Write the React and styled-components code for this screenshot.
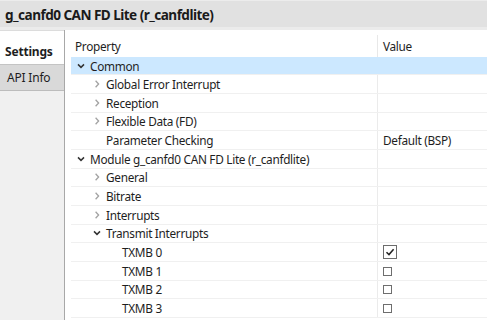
import React from 'react';
import styled, { createGlobalStyle } from 'styled-components';

const GlobalStyle = createGlobalStyle`
  body {
    margin: 0;
    font-family: "Noto Sans", "Open Sans", sans-serif;
    color: #1e1e1e;
  }
`;

const Page = styled.div`
  width: 487px;
  height: 320px;
  overflow: hidden;
  display: flex;
  flex-direction: column;
  background: #fff;
`;

const TitleBar = styled.div`
  height: 26px;
  flex-shrink: 0;
  display: flex;
  align-items: center;
  padding-left: 5px;
  background: #e1e1e1;
  border-top: 1px solid #ececec;
  border-bottom: 3px solid #ebebeb;
  font-size: 13.6px;
  font-weight: 700;
  color: #1a1a1a;
  letter-spacing: -0.55px;
`;

const Body = styled.div`
  flex: 1;
  display: flex;
  min-height: 0;
`;

const Sidebar = styled.div`
  width: 64px;
  flex-shrink: 0;
  background: #f0f0f0;
  border-right: 1px solid #a8a8a8;
  display: flex;
  flex-direction: column;
`;

const Tab = styled.div`
  height: ${p => (p.active ? '34px' : '27px')};
  display: flex;
  align-items: center;
  padding-left: ${p => (p.active ? '5px' : '7px')};
  font-size: 12px;
  letter-spacing: -0.2px;
  font-weight: ${p => (p.active ? 700 : 400)};
  background: ${p => (p.active ? '#fff' : '#d9d9d9')};
  border-top: 1px solid ${p => (p.active ? '#dcdcdc' : '#c4c4c4')};
  border-bottom: ${p => (p.active ? 'none' : '1px solid #bcbcbc')};
  box-sizing: border-box;
  padding-top: ${p => (p.active ? '8px' : '0')};
`;

const Content = styled.div`
  flex: 1;
  padding-left: 6px;
  min-width: 0;
`;

const Table = styled.div`
  display: flex;
  flex-direction: column;
`;

const HeaderRow = styled.div`
  display: grid;
  grid-template-columns: 306px 1fr;
  height: 26.7px;
  font-size: 11.8px;
  letter-spacing: -0.3px;
`;

const HeaderCell = styled.div`
  display: flex;
  align-items: flex-end;
  padding-left: ${p => (p.value ? '5px' : '4px')};
  padding-bottom: 3px;
  margin-top: 5px;
  border-left: ${p => (p.value ? '1px solid #e8e8e8' : 'none')};
`;

const Row = styled.div`
  display: grid;
  grid-template-columns: 306px 1fr;
  height: 18.67px;
  box-sizing: border-box;
  border-bottom: 1px solid #f0f0f0;
  background: ${p => (p.selected ? '#cce8ff' : 'transparent')};
  font-size: 11.8px;
  letter-spacing: -0.3px;
`;

const NameCell = styled.div`
  display: flex;
  align-items: center;
  padding-left: ${p => 3 + p.level * 16}px;
  white-space: nowrap;
`;

const ValueCell = styled.div`
  display: flex;
  align-items: center;
  padding-left: 5px;
  border-left: 1px solid ${p => (p.selected ? '#cce8ff' : '#ebebeb')};
`;

const Twisty = styled.span`
  width: 10px;
  padding-left: 2px;
  margin-right: 4px;
  display: flex;
  align-items: center;
  justify-content: center;
`;

const CheckBox = styled.span`
  width: ${p => (p.checked ? '14px' : '9px')};
  height: ${p => (p.checked ? '14px' : '9px')};
  box-sizing: border-box;
  border: 1px solid ${p => (p.checked ? '#6c6c6c' : '#6e6e6e')};
  background: #fff;
  display: flex;
  align-items: center;
  justify-content: center;
  margin-top: ${p => (p.checked ? '0' : '1px')};
`;

const Chevron = ({ open }) =>
  open ? (
    <svg width="8" height="8" viewBox="0 0 8 8">
      <path d="M1 2.4 L4 5.4 L7 2.4" fill="none" stroke="#333" strokeWidth="1.5" />
    </svg>
  ) : (
    <svg width="8" height="8" viewBox="0 0 8 8">
      <path d="M2.6 0.8 L5.6 4 L2.6 7.2" fill="none" stroke="#a3a3a3" strokeWidth="1.3" />
    </svg>
  );

const Check = () => (
  <svg width="10" height="10" viewBox="0 0 10 10">
    <path d="M1.5 5.2 L4 7.6 L8.6 2.2" fill="none" stroke="#222" strokeWidth="1.5" />
  </svg>
);

const rows = [
  { name: 'Common', level: 0, twisty: 'open', selected: true },
  { name: 'Global Error Interrupt', level: 1, twisty: 'closed' },
  { name: 'Reception', level: 1, twisty: 'closed' },
  { name: 'Flexible Data (FD)', level: 1, twisty: 'closed' },
  { name: 'Parameter Checking', level: 1, value: 'Default (BSP)' },
  { name: 'Module g_canfd0 CAN FD Lite (r_canfdlite)', level: 0, twisty: 'open' },
  { name: 'General', level: 1, twisty: 'closed' },
  { name: 'Bitrate', level: 1, twisty: 'closed' },
  { name: 'Interrupts', level: 1, twisty: 'closed' },
  { name: 'Transmit Interrupts', level: 1, twisty: 'open' },
  { name: 'TXMB 0', level: 2, check: true, checked: true },
  { name: 'TXMB 1', level: 2, check: true },
  { name: 'TXMB 2', level: 2, check: true },
  { name: 'TXMB 3', level: 2, check: true },
];

const App = () => {
  return (
    <>
      <GlobalStyle />
      <Page>
        <TitleBar>g_canfd0 CAN FD Lite (r_canfdlite)</TitleBar>
        <Body>
          <Sidebar>
            <Tab active>Settings</Tab>
            <Tab>API Info</Tab>
          </Sidebar>
          <Content>
            <Table>
              <HeaderRow>
                <HeaderCell>Property</HeaderCell>
                <HeaderCell value>Value</HeaderCell>
              </HeaderRow>
              {rows.map(r => (
                <Row key={r.name} selected={r.selected}>
                  <NameCell level={r.level}>
                    <Twisty>{r.twisty && <Chevron open={r.twisty === 'open'} />}</Twisty>
                    {r.name}
                  </NameCell>
                  <ValueCell selected={r.selected}>
                    {r.check ? (
                      <CheckBox checked={r.checked}>{r.checked && <Check />}</CheckBox>
                    ) : (
                      r.value
                    )}
                  </ValueCell>
                </Row>
              ))}
            </Table>
          </Content>
        </Body>
      </Page>
    </>
  );
};

export default App;
